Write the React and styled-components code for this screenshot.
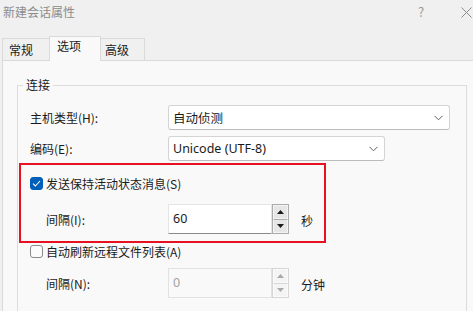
import React from "react";
import styled, { createGlobalStyle } from "styled-components";

const Global = createGlobalStyle`
  html, body { margin: 0; padding: 0; }
  body {
    background: #f0f0f0;
    font-family: "Noto Sans", "Noto Sans CJK SC", sans-serif;
    font-size: 12px;
    color: #1a1a1a;
    overflow: hidden;
    width: 473px;
    height: 311px;
  }
`;

const Window = styled.div`
  display: flex;
  flex-direction: column;
  width: 473px;
  height: 311px;
  overflow: hidden;
`;

const TitleBar = styled.div`
  flex-shrink: 0;
  display: flex;
  align-items: flex-start;
  height: 37px;
  padding-left: 3px;
  line-height: 24px;
  color: #8c8c8c;
  font-family: "Noto Sans CJK SC", sans-serif;
  font-size: 12px;
`;

const TitleText = styled.span`
  flex: 1;
`;

const TitleButton = styled.span`
  width: ${p => p.w}px;
  margin-right: ${p => p.mr || 0}px;
  display: flex;
  justify-content: center;
  align-items: center;
  height: 24px;
  color: #9a9a9a;
  font-size: 13px;
`;

const TabStrip = styled.div`
  flex-shrink: 0;
  display: flex;
  align-items: flex-end;
  height: 24px;
  padding-left: 2px;
  position: relative;
  z-index: 1;
  margin-bottom: -1px;
`;

const Tab = styled.div`
  box-sizing: border-box;
  width: ${p => p.w}px;
  height: ${p => (p.active ? 25 : 23)}px;
  padding-left: ${p => p.pl}px;
  margin-left: ${p => p.ml || 0}px;
  border: 1px solid #dadada;
  border-bottom: ${p => (p.active ? "none" : "1px solid #dadada")};
  background: ${p => (p.active ? "#f9f9f9" : "#f0f0f0")};
  font-family: "Noto Sans CJK SC", sans-serif;
  font-size: 12px;
  line-height: ${p => (p.active ? 18 : 22)}px;
  color: #1a1a1a;
`;

const Panel = styled.div`
  flex: 1 0 auto;
  margin-left: 2px;
  width: 520px;
  box-sizing: border-box;
  border: 1px solid #dadada;
  background: #f9f9f9;
  padding-left: 14px;
  padding-top: 16px;
`;

const Group = styled.fieldset`
  box-sizing: border-box;
  width: 450px;
  margin: 0;
  padding: 12px 0 0 0;
  border: 1px solid #dcdcdc;
  border-bottom: none;
  min-height: 240px;
`;

const Legend = styled.legend`
  margin-left: 5px;
  padding: 0 3px;
  line-height: 16px;
  font-family: "Noto Sans CJK SC", sans-serif;
  font-size: 12px;
`;

const FormRow = styled.div`
  display: grid;
  grid-template-columns: ${p => p.col}px auto;
  align-items: center;
  padding-left: ${p => p.pl}px;
  margin-top: ${p => p.mt || 0}px;
`;

const Label = styled.span`
  font-family: "Noto Sans CJK SC", sans-serif;
  font-size: 12px;
`;

const Select = styled.div`
  box-sizing: border-box;
  width: ${p => p.w}px;
  height: 25px;
  display: flex;
  align-items: center;
  justify-content: space-between;
  padding: 0 6px 0 4px;
  background: #ffffff;
  border: 1px solid #d4d4d4;
  border-bottom-color: #bcbcbc;
  border-radius: 3px;
  font-family: "Noto Sans", "Noto Sans CJK SC", sans-serif;
  font-size: 12.5px;
`;

const Chevron = () => (
  <svg width="9" height="6" viewBox="0 0 9 6">
    <path d="M0.5 0.8 L4.5 4.8 L8.5 0.8" fill="none" stroke="#606060" strokeWidth="1" />
  </svg>
);

const RedBox = styled.div`
  box-sizing: border-box;
  width: 307px;
  height: 80px;
  margin: 2px 0 0 1px;
  border: 2px solid #e81123;
  padding: 10px 0 0 9px;
`;

const CheckRow = styled.div`
  display: flex;
  align-items: center;
  gap: 3px;
  height: 16px;
  padding-left: ${p => p.pl || 0}px;
  font-family: "Noto Sans CJK SC", sans-serif;
  font-size: 12px;
`;

const Box = styled.span`
  box-sizing: border-box;
  width: 13px;
  height: 13px;
  border-radius: 3px;
  display: inline-flex;
  align-items: center;
  justify-content: center;
  background: ${p => (p.checked ? "#005fb8" : "#fbfbfb")};
  border: 1px solid ${p => (p.checked ? "#005fb8" : "#8a8a8a")};
`;

const Spin = styled.div`
  display: flex;
  align-items: center;
  gap: 12px;
`;

const SpinBox = styled.div`
  display: flex;
  height: 30px;
`;

const SpinInput = styled.div`
  box-sizing: border-box;
  width: 104px;
  height: 30px;
  padding-left: 4px;
  padding-bottom: 2px;
  display: flex;
  align-items: center;
  background: ${p => (p.disabled ? "#f9f9f9" : "#ffffff")};
  border: 1px solid ${p => (p.disabled ? "#e2e2e2" : "#e5e5e5")};
  border-bottom: 1px solid ${p => (p.disabled ? "#e2e2e2" : "#8a8a8a")};
  color: ${p => (p.disabled ? "#a0a0a0" : "#1a1a1a")};
  font-family: "Noto Sans", sans-serif;
  font-size: 12.5px;
`;

const SpinButtons = styled.div`
  box-sizing: border-box;
  width: 17px;
  height: 30px;
  border: 1px solid ${p => (p.disabled ? "#d6d6d6" : "#acacac")};
  display: flex;
  flex-direction: column;
  background: ${p => (p.disabled ? "#f4f4f4" : "#e6e6e6")};
`;

const SpinBtn = styled.div`
  flex: 1;
  display: flex;
  align-items: center;
  justify-content: center;
  border: 1px solid ${p => (p.disabled ? "#fafafa" : "#f4f4f4")};
  border-top-color: ${p => (p.bottom ? (p.disabled ? "#d6d6d6" : "#acacac") : undefined)};
`;

const Unit = styled.span`
  font-family: "Noto Sans CJK SC", sans-serif;
  font-size: 12px;
  padding-top: 2px;
`;

const Tri = ({ up, color }) => (
  <svg width="7" height="4" viewBox="0 0 7 4">
    <path d={up ? "M0 4 L3.5 0 L7 4 Z" : "M0 0 L3.5 4 L7 0 Z"} fill={color} />
  </svg>
);

const SpinControl = ({ value, unit, disabled }) => {
  const c = disabled ? "#a9a9a9" : "#1a1a1a";
  return (
    <Spin>
      <SpinBox>
        <SpinInput disabled={disabled}>{value}</SpinInput>
        <SpinButtons disabled={disabled}>
          <SpinBtn disabled={disabled}><Tri up color={c} /></SpinBtn>
          <SpinBtn disabled={disabled} bottom><Tri color={c} /></SpinBtn>
        </SpinButtons>
      </SpinBox>
      <Unit>{unit}</Unit>
    </Spin>
  );
};

const Check = () => (
  <svg width="9" height="7" viewBox="0 0 9 7">
    <path d="M1 3.6 L3.4 6 L8 1" fill="none" stroke="#ffffff" strokeWidth="1.1" />
  </svg>
);

export default function App() {
  return (
    <>
      <Global />
      <Window>
        <TitleBar>
          <TitleText>新建会话属性</TitleText>
          <TitleButton w={16} mr={30}>?</TitleButton>
          <TitleButton w={14}>
            <svg width="11" height="11" viewBox="0 0 11 11">
              <path d="M0.5 0.5 L10.5 10.5 M10.5 0.5 L0.5 10.5" stroke="#8a8a8a" strokeWidth="1" />
            </svg>
          </TitleButton>
        </TitleBar>
        <TabStrip>
          <Tab w={48} pl={6}>常规</Tab>
          <Tab w={52} pl={7} ml={-1} active>选项</Tab>
          <Tab w={45} pl={4} ml={-1}>高级</Tab>
        </TabStrip>
        <Panel>
          <Group>
            <Legend>连接</Legend>
            <FormRow col={138} pl={12}>
              <Label>主机类型(H):</Label>
              <Select w={282}>
                <span>自动侦测</span>
                <Chevron />
              </Select>
            </FormRow>
            <FormRow col={138} pl={12} mt={6}>
              <Label>编码(E):</Label>
              <Select w={217}>
                <span>Unicode (UTF-8)</span>
                <Chevron />
              </Select>
            </FormRow>
            <RedBox>
              <CheckRow>
                <Box checked><Check /></Box>
                <span>发送保持活动状态消息(S)</span>
              </CheckRow>
              <FormRow col={122} pl={16} mt={13}>
                <Label>间隔(I):</Label>
                <SpinControl value="60" unit="秒" />
              </FormRow>
            </RedBox>
            <CheckRow pl={12}>
              <Box />
              <span>自动刷新远程文件列表(A)</span>
            </CheckRow>
            <FormRow col={122} pl={28} mt={9}>
              <Label>间隔(N):</Label>
              <SpinControl value="0" unit="分钟" disabled />
            </FormRow>
          </Group>
        </Panel>
      </Window>
    </>
  );
}
